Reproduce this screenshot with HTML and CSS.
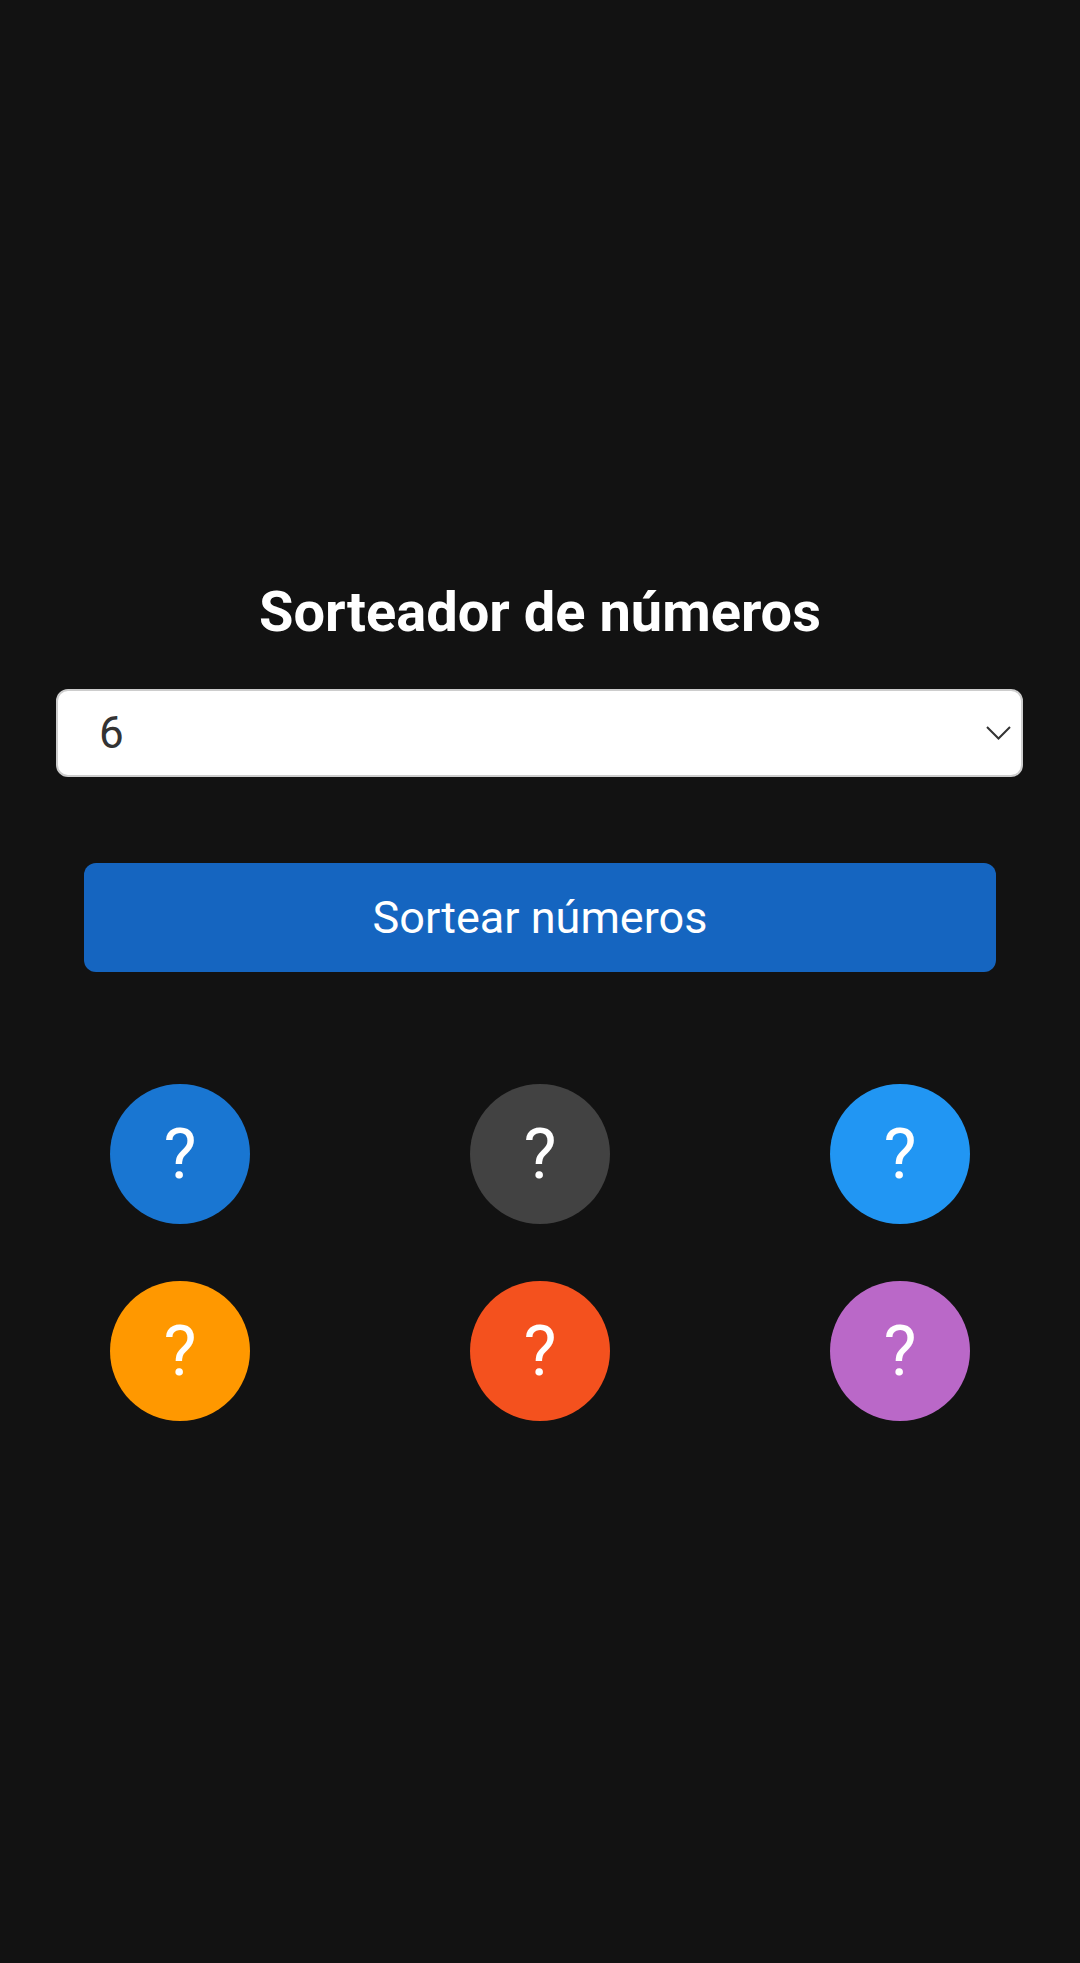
FILE: index.html
```html
<!DOCTYPE html>
<html lang="pt">
<head>
<meta charset="utf-8">
<title>Sorteador de números</title>
<link rel="stylesheet" href="styles.css">
</head>
<body>
<main class="app">
  <h1 class="title">Sorteador de números</h1>
  <div class="select">
    <span class="select-value">6</span>
    <svg class="chevron" width="25" height="14" viewBox="0 0 25 14"><path d="M1 1 L12.5 12.5 L24 1" fill="none" stroke="#333" stroke-width="2"/></svg>
  </div>
  <div class="btn">Sortear números</div>
  <div class="balls">
    <div class="ball b1">?</div>
    <div class="ball b2">?</div>
    <div class="ball b3">?</div>
    <div class="ball b4">?</div>
    <div class="ball b5">?</div>
    <div class="ball b6">?</div>
  </div>
</main>
</body>
</html>
```
FILE: styles.css
```css
html, body {
  margin: 0;
  padding: 0;
  background: #121212;
}
body {
  font-family: Roboto, "Noto Sans", sans-serif;
  min-height: 1963px;
}
.app {
  padding-top: 580px;
}
.title {
  margin: 0;
  font-size: 56px;
  line-height: 65px;
  font-weight: 700;
  color: #ffffff;
  text-align: center;
}
.select {
  margin: 44px 57px 0 56px;
  height: 88px;
  box-sizing: border-box;
  border: 2px solid #cdcdcd;
  border-radius: 12px;
  background: #ffffff;
  display: flex;
  align-items: center;
  justify-content: space-between;
  padding: 0 10px 0 41px;
}
.select-value {
  font-size: 44px;
  color: #333333;
}
.chevron {
  display: block;
}
.btn {
  margin: 86px 84px 0 84px;
  height: 109px;
  border-radius: 12px;
  background: #1565c0;
  color: #ffffff;
  font-size: 45px;
  display: flex;
  align-items: center;
  justify-content: center;
}
.balls {
  margin-top: 112px;
  display: grid;
  grid-template-columns: repeat(3, 1fr);
  row-gap: 57px;
  justify-items: center;
}
.ball {
  width: 140px;
  height: 140px;
  border-radius: 50%;
  display: flex;
  align-items: center;
  justify-content: center;
  color: #ffffff;
  font-size: 70px;
}
.b1 { background: #1976d2; }
.b2 { background: #424242; }
.b3 { background: #2196f3; }
.b4 { background: #ff9800; }
.b5 { background: #f4511e; }
.b6 { background: #ba68c8; }
```
